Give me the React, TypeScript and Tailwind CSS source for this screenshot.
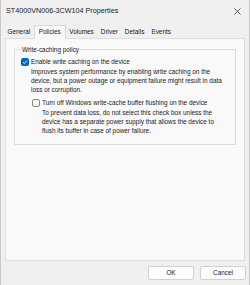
import React from "react";

const tabs = ["General", "Policies", "Volumes", "Driver", "Details", "Events"];

const CheckRow: React.FC<{ checked?: boolean; label: string; children: React.ReactNode }> = ({
  checked,
  label,
  children,
}) => (
  <div className="flex gap-[2px]">
    <div
      className={
        checked
          ? "mt-[1px] flex h-[8px] w-[8px] shrink-0 items-center justify-center rounded-[2px] bg-[#0067c0]"
          : "mt-[1px] h-[8px] w-[8px] shrink-0 rounded-[2px] border border-[#8a8a8a] bg-[#f7f7f7]"
      }
    >
      {checked && (
        <svg width="6" height="6" viewBox="0 0 6 6">
          <path d="M1 3.2 L2.4 4.5 L5 1.5" fill="none" stroke="#fff" strokeWidth="0.9" />
        </svg>
      )}
    </div>
    <div className="flex flex-col whitespace-nowrap">
      <div className="leading-[10px]">{label}</div>
      <div className="leading-[9px]">{children}</div>
    </div>
  </div>
);

export default function App() {
  return (
    <div
      className="flex h-[285px] w-[250px] flex-col border-x border-[#c8c8c8] bg-[#f0f0f0] text-[6.4px] text-[#1a1a1a]"
      style={{ fontFamily: '"Liberation Sans", Arial, sans-serif' }}
    >
      <div className="flex h-[22px] items-center justify-between pl-[5px] pr-[8px] text-[7.2px] text-[#1b1b1b]">
        <span>ST4000VN006-3CW104 Properties</span>
        <svg width="7" height="7" viewBox="0 0 7 7">
          <path d="M0.5 0.5 L6.5 6.5 M6.5 0.5 L0.5 6.5" stroke="#333" strokeWidth="0.8" />
        </svg>
      </div>

      <div className="mt-[2px] flex h-[14px] items-end px-[3px]">
        {tabs.map((t) =>
          t === "Policies" ? (
            <div
              key={t}
              className="z-10 -mb-[1px] flex h-[14px] items-start border border-b-0 border-[#d9d9d9] bg-[#f9f9f9] px-[4px] pt-[1px]"
            >
              {t}
            </div>
          ) : (
            <div key={t} className="flex h-[12px] items-start px-[3.5px] pt-[1px]">
              {t}
            </div>
          )
        )}
      </div>

      <div className="mx-[4px] flex h-[223px] flex-col border border-[#dedede] bg-[#f9f9f9] px-[8px] pt-[6px]">
        <fieldset className="h-[100px] border border-[#dcdcdc] px-[6px]">
          <legend className="px-[1px] leading-[9px]">Write-caching policy</legend>
          <div className="mt-[3px] flex flex-col gap-[4px]">
            <CheckRow checked label="Enable write caching on the device">
              Improves system performance by enabling write caching on the
              <br />
              device, but a power outage or equipment failure might result in data
              <br />
              loss or corruption.
            </CheckRow>
            <div className="pl-[11px]">
              <CheckRow label="Turn off Windows write-cache buffer flushing on the device">
                To prevent data loss, do not select this check box unless the
                <br />
                device has a separate power supply that allows the device to
                <br />
                flush its buffer in case of power failure.
              </CheckRow>
            </div>
          </div>
        </fieldset>
      </div>

      <div className="flex justify-end gap-[6px] pr-[3px] pt-[5px]">
        <button className="h-[14px] w-[46px] rounded-[2px] border border-[#d0d0d0] bg-[#fdfdfd] text-[6.4px]">
          OK
        </button>
        <button className="h-[14px] w-[46px] rounded-[2px] border border-[#d0d0d0] bg-[#fdfdfd] text-[6.4px]">
          Cancel
        </button>
      </div>
    </div>
  );
}
